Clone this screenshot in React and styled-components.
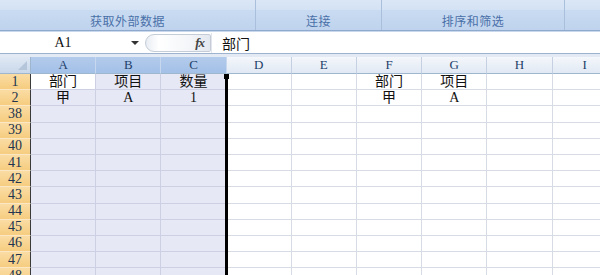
import React from 'react'
import styled, { createGlobalStyle } from 'styled-components'

const GlobalStyle = createGlobalStyle`
  html, body {
    margin: 0;
    padding: 0;
    background: #ffffff;
  }
  body {
    width: 600px;
    height: 275px;
    overflow: hidden;
    font-family: "Noto Sans CJK SC", sans-serif;
  }
`

const COL_W = 65.2
const ROW_H = 16.2
const HEAD_W = 31
const LATIN = '"Liberation Serif", "Noto Sans CJK SC", serif'

const columns = ['A', 'B', 'C', 'D', 'E', 'F', 'G', 'H', 'I']
const selectedCols = ['A', 'B', 'C']

const rows = [
  { n: 1, cells: { A: '部门', B: '项目', C: '数量', F: '部门', G: '项目' } },
  { n: 2, cells: { A: '甲', B: 'A', C: '1', F: '甲', G: 'A' } },
  { n: 38 }, { n: 39 }, { n: 40 }, { n: 41 }, { n: 42 },
  { n: 43 }, { n: 44 }, { n: 45 }, { n: 46 }, { n: 47 }, { n: 48 }
]

const groups = [
  { label: '获取外部数据', width: 255 },
  { label: '连接', width: 125 },
  { label: '排序和筛选', width: 182 },
  { label: '', width: 38 }
]

const Page = styled.div`
  width: 600px;
  height: 275px;
  display: flex;
  flex-direction: column;
  overflow: hidden;
`

const Ribbon = styled.div`
  display: flex;
  height: 30px;
  border-bottom: 1px solid #8ea9cb;
  box-shadow: 0 1px 0 #c9d8ec;
  background: #d6e4f4;
`

const Group = styled.div`
  width: ${p => p.$w}px;
  flex: none;
  display: flex;
  flex-direction: column;
  border-right: 1px solid #a9bfdc;
  box-shadow: inset -1px 0 0 #eef4fb, inset 1px 0 0 #eef4fb;
`

const GroupBody = styled.div`
  height: 10px;
  background: linear-gradient(#dbe7f6, #d3e2f4);
`

const GroupLabel = styled.div`
  flex: 1;
  display: flex;
  align-items: center;
  justify-content: center;
  background: linear-gradient(#c9dbf1, #bfd3ee);
  color: #4a70a8;
  font-size: 12px;
  letter-spacing: 0.5px;
`

const FormulaBar = styled.div`
  margin-top: 2px;
  height: 20px;
  display: flex;
  align-items: center;
  background: #ffffff;
`

const NameBox = styled.div`
  width: 145px;
  flex: none;
  height: 100%;
  display: flex;
  align-items: center;
  font-family: ${LATIN};
  font-size: 14px;
  color: #111;
`

const NameText = styled.span`
  width: 126px;
  text-align: center;
`

const DropArrow = styled.span`
  width: 0;
  height: 0;
  border-left: 4px solid transparent;
  border-right: 4px solid transparent;
  border-top: 4px solid #333;
  margin-left: 5px;
`

const FxPill = styled.div`
  width: 66px;
  flex: none;
  height: 18px;
  display: flex;
  align-items: center;
  justify-content: flex-end;
  padding-right: 6px;
  box-sizing: border-box;
  border-radius: 10px 2px 2px 10px;
  border: 1px solid #c4ccd8;
  background: linear-gradient(90deg, #e9edf3 0%, #ffffff 20%, #f3f5f8 70%, #e3e8ef 100%);
`

const Fx = styled.span`
  font-family: "Liberation Serif", serif;
  font-style: italic;
  font-weight: bold;
  font-size: 13px;
  color: #444;
  letter-spacing: -1px;
`

const FormulaText = styled.div`
  flex: 1;
  padding-left: 10px;
  font-size: 14px;
  color: #111;
  border-left: 1px solid #e2e6ec;
  height: 100%;
  display: flex;
  align-items: center;
`

const Divider = styled.div`
  height: 3px;
  border-top: 1px solid #9db3cf;
  background: #e3eaf4;
`

const SheetWrap = styled.div`
  position: relative;
  flex: 1;
  overflow: hidden;
`

const Grid = styled.div`
  display: grid;
  grid-template-columns: ${HEAD_W}px repeat(${columns.length}, ${COL_W}px);
  grid-template-rows: 17px repeat(${rows.length}, ${ROW_H}px);
`

const Corner = styled.div`
  position: relative;
  background: linear-gradient(#dfe8f4, #c9d8ea);
  border-right: 1px solid #9eb6ce;
  border-bottom: 1px solid #9eb6ce;
  box-sizing: border-box;
  &::after {
    content: '';
    position: absolute;
    right: 3px;
    bottom: 3px;
    width: 0;
    height: 0;
    border-left: 9px solid transparent;
    border-bottom: 9px solid #b6c6da;
  }
`

const ColHead = styled.div`
  box-sizing: border-box;
  display: flex;
  align-items: center;
  justify-content: center;
  font-family: ${LATIN};
  font-size: 13px;
  color: #23406a;
  border-right: 1px solid ${p => (p.$sel ? '#c6d7ee' : '#c5d1e2')};
  border-bottom: 1px solid #9eb6ce;
  background: ${p =>
    p.$sel
      ? 'linear-gradient(#b3cbec, #a3c0e7)'
      : 'linear-gradient(#f4f7fb, #e1e9f4)'};
`

const RowHead = styled.div`
  box-sizing: border-box;
  display: flex;
  align-items: center;
  justify-content: center;
  font-family: ${LATIN};
  font-size: 14px;
  color: #23344f;
  background: linear-gradient(#fadca3, #f6cd80);
  border-bottom: 1px solid #fbe7c3;
  border-right: 1px solid #3a3a3a;
`

const Cell = styled.div`
  box-sizing: border-box;
  display: flex;
  align-items: center;
  justify-content: center;
  font-family: ${LATIN};
  font-size: 14px;
  line-height: 1;
  color: #111;
  background: ${p => (p.$active ? '#ffffff' : p.$sel ? '#e7e8f5' : '#ffffff')};
  border-right: 1px solid ${p => (p.$sel ? '#cdd0e2' : '#d6dbe4')};
  border-bottom: 1px solid ${p => (p.$sel ? '#cdd0e2' : '#d6dbe4')};
`

const SelectionEdge = styled.div`
  position: absolute;
  top: 17px;
  bottom: 0;
  left: ${HEAD_W + COL_W * 3 - 2}px;
  width: 3px;
  background: #000;
  &::before {
    content: '';
    position: absolute;
    top: 0;
    left: -1px;
    width: 5px;
    height: 5px;
    background: #000;
  }
`

const Sheet = () => (
  <SheetWrap>
    <Grid>
      <Corner />
      {columns.map(c => (
        <ColHead key={c} $sel={selectedCols.includes(c)}>
          {c}
        </ColHead>
      ))}
      {rows.map(r => (
        <React.Fragment key={r.n}>
          <RowHead>{r.n}</RowHead>
          {columns.map(c => (
            <Cell
              key={c}
              $sel={selectedCols.includes(c)}
              $active={r.n === 1 && c === 'A'}
            >
              {r.cells && r.cells[c]}
            </Cell>
          ))}
        </React.Fragment>
      ))}
    </Grid>
    <SelectionEdge />
  </SheetWrap>
)

const App = () => (
  <Page>
    <GlobalStyle />
    <Ribbon>
      {groups.map((g, i) => (
        <Group key={i} $w={g.width}>
          <GroupBody />
          <GroupLabel>{g.label}</GroupLabel>
        </Group>
      ))}
    </Ribbon>
    <FormulaBar>
      <NameBox>
        <NameText>A1</NameText>
        <DropArrow />
      </NameBox>
      <FxPill>
        <Fx>fx</Fx>
      </FxPill>
      <FormulaText>部门</FormulaText>
    </FormulaBar>
    <Divider />
    <Sheet />
  </Page>
)

export default App
